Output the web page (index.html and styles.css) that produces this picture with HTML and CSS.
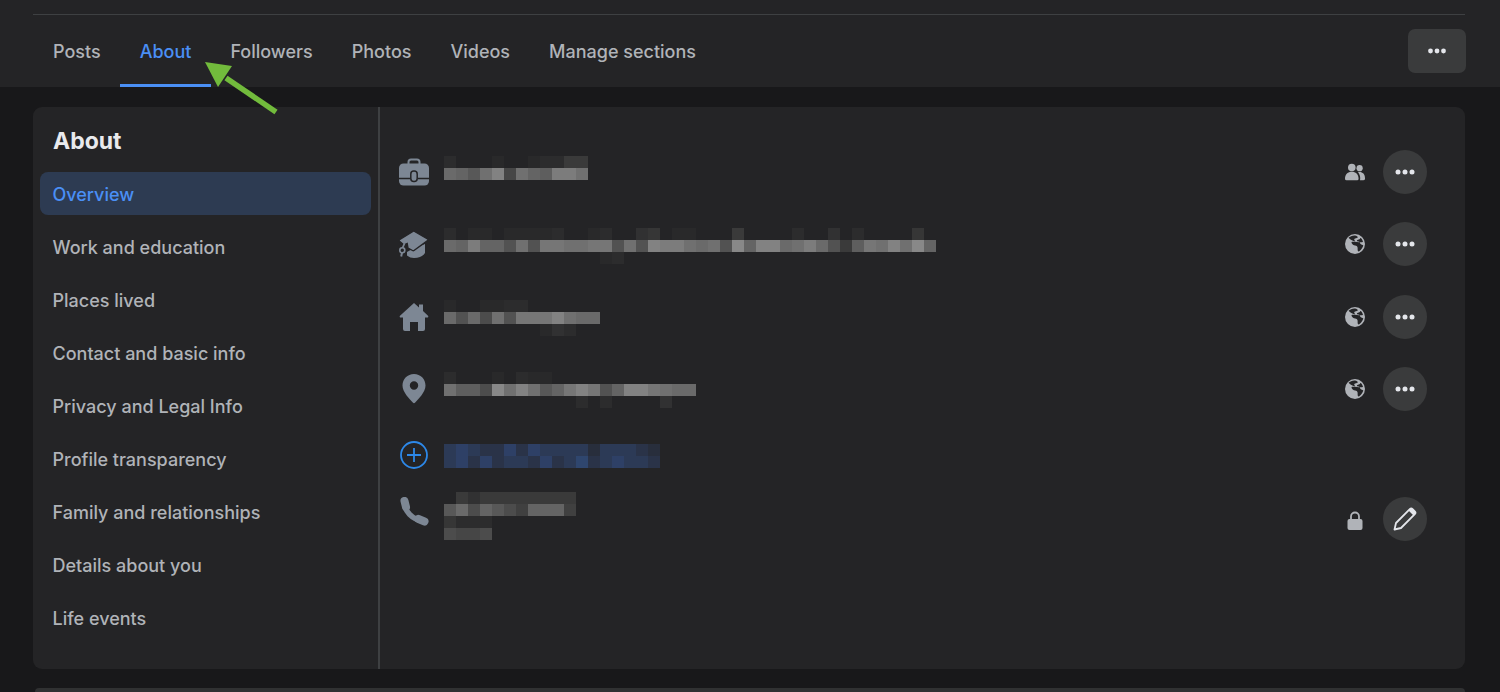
FILE: index.html
```html
<!DOCTYPE html>
<html lang="en">
<head>
<meta charset="utf-8">
<title>About</title>
<link rel="stylesheet" href="styles.css">
</head>
<body>
<header class="head">
  <div class="head-inner">
    <nav class="tabs">
      <a class="tab">Posts</a>
      <a class="tab active">About</a>
      <a class="tab">Followers</a>
      <a class="tab">Photos</a>
      <a class="tab">Videos</a>
      <a class="tab">Manage sections</a>
      <button class="more"><svg class="dots-s" viewBox="0 0 20 6"><circle cx="3.500" cy="3" r="2.400"/><circle cx="10" cy="3" r="2.400"/><circle cx="16.500" cy="3" r="2.400"/></svg></button>
    </nav>
  </div>
</header>
<svg class="arrow" viewBox="0 0 80 60"><path d="M26 18 L76 52" stroke="#72bb3c" stroke-width="5.500" fill="none"/><path d="M5 2 L32 6 L18 27 Z" fill="#72bb3c"/></svg>
<main class="card">
  <aside class="side">
    <h2 class="side-title">About</h2>
    <ul class="side-list">
      <li class="side-item sel">Overview</li>
      <li class="side-item">Work and education</li>
      <li class="side-item">Places lived</li>
      <li class="side-item">Contact and basic info</li>
      <li class="side-item">Privacy and Legal Info</li>
      <li class="side-item">Profile transparency</li>
      <li class="side-item">Family and relationships</li>
      <li class="side-item">Details about you</li>
      <li class="side-item">Life events</li>
    </ul>
  </aside>
  <section class="content">
    <div class="row">
      <svg class="ico" viewBox="0 0 30 30"><path d="M9.500 8V5a2.500 2.500 0 0 1 2.500-2.500h6A2.500 2.500 0 0 1 20.500 5v3" fill="none" stroke="#7d8794" stroke-width="2"/><rect x="0" y="6.500" width="30" height="22" rx="4.500" fill="#7d8794"/><path d="M0 21.500h11.500M18.500 21.500H30" stroke="#242426" stroke-width="1.600"/><rect x="11.800" y="14" width="6.400" height="10.500" rx="3" fill="#7d8794" stroke="#242426" stroke-width="1.500"/></svg>
      <div class="mosaic">
        <div class="mr"><i class="g2e"></i><i></i><i></i><i></i><i class="g2a"></i><i></i><i></i><i class="g2a"></i><i class="g2e"></i><i class="g2e"></i><i class="g3a"></i><i class="g3a"></i></div>
        <div class="mr"><i class="g6a"></i><i class="g64"></i><i class="g58"></i><i class="g70"></i><i class="g82"></i><i class="g46"></i><i class="g70"></i><i class="g64"></i><i class="g5e"></i><i class="g7c"></i><i class="g7c"></i><i class="g70"></i></div>
        <div class="mr"></div>
      </div>
      <svg class="priv" viewBox="0 0 20 20"><circle cx="6.800" cy="5.500" r="3.800"/><path d="M0 17c0-5 3-7.200 6.800-7.200S13.600 12 13.600 17a1.500 1.500 0 0 1-1.500 1.300H1.500A1.500 1.500 0 0 1 0 17z"/><circle cx="14.600" cy="6.200" r="3.100"/><path d="M13 10.200c4-.8 7 1.500 7 6a1.800 1.800 0 0 1-1.800 2H15c.6-3.300-.2-6-2-8z"/></svg>
      <button class="act"><svg class="dots" viewBox="0 0 20 6"><circle cx="3" cy="3" r="2.500"/><circle cx="10" cy="3" r="2.500"/><circle cx="17" cy="3" r="2.500"/></svg></button>
    </div>
    <div class="row">
      <svg class="ico" viewBox="0 0 30 30"><path d="M8 23 15 19 26 15v9c-2 3-6 5-11 5-2.500 0-5-.8-7-2.500z" fill="#7d8794"/><path d="M14.700 2 28.500 10a1 1 0 0 1 0 1.700L15 21.500a1.500 1.500 0 0 1-1.500 0L9 19l-.8-4.500L5 16l-4.500-3.800a1 1 0 0 1 0-1.500z" fill="#7d8794" stroke="#242426" stroke-width="1.400"/><path d="M5.500 14.500 3.500 19" stroke="#7d8794" stroke-width="1.800"/><circle cx="3.300" cy="21.200" r="2.500" fill="none" stroke="#7d8794" stroke-width="1.600"/><path d="M3 23.500l-.8 4" stroke="#7d8794" stroke-width="2"/></svg>
      <div class="mosaic">
        <div class="mr"><i class="g2e"></i><i></i><i class="g2a"></i><i class="g2a"></i><i></i><i class="g2a"></i><i class="g2a"></i><i class="g2a"></i><i class="g2a"></i><i class="g2e"></i><i></i><i></i><i class="g2a"></i><i class="g2e"></i><i></i><i></i><i class="g32"></i><i class="g36"></i><i></i><i class="g2a"></i><i class="g2a"></i><i></i><i></i><i></i><i class="g3a"></i><i></i><i></i><i></i><i></i><i class="g2e"></i><i></i><i></i><i class="g32"></i><i></i><i class="g2e"></i><i></i><i></i><i></i><i></i><i class="g36"></i></div>
        <div class="mr"><i class="g6a"></i><i class="g64"></i><i class="g7c"></i><i class="g64"></i><i class="g64"></i><i class="g52"></i><i class="g70"></i><i class="g52"></i><i class="g76"></i><i class="g76"></i><i class="g70"></i><i class="g70"></i><i class="g76"></i><i class="g76"></i><i class="g52"></i><i class="g70"></i><i class="g52"></i><i class="g82"></i><i class="g7c"></i><i class="g7c"></i><i class="g70"></i><i class="g6a"></i><i class="g70"></i><i class="g52"></i><i class="g88"></i><i class="g64"></i><i class="g82"></i><i class="g82"></i><i class="g6a"></i><i class="g70"></i><i class="g7c"></i><i class="g6a"></i><i class="g52"></i><i class="g3a"></i><i class="g5e"></i><i class="g76"></i><i class="g70"></i><i class="g82"></i><i class="g70"></i><i class="g88"></i><i class="g64"></i></div>
        <div class="mr"><i></i><i></i><i></i><i></i><i></i><i></i><i></i><i></i><i></i><i></i><i></i><i></i><i></i><i class="g2a"></i><i class="g2e"></i></div>
      </div>
      <svg class="priv" viewBox="0 0 20 20"><use href="#globe"/></svg>
      <button class="act"><svg class="dots" viewBox="0 0 20 6"><circle cx="3" cy="3" r="2.500"/><circle cx="10" cy="3" r="2.500"/><circle cx="17" cy="3" r="2.500"/></svg></button>
    </div>
    <div class="row low">
      <svg class="ico" viewBox="0 0 30 30"><path fill-rule="evenodd" d="M15 1 20 5.500V2.500h4V9l5 4.700c.7.800.2 1.800-.8 1.800H26V27a2 2 0 0 1-2 2h-5V20h-8v9H6a2 2 0 0 1-2-2V15.500H1.800c-1 0-1.500-1-.8-1.800z" fill="#7d8794"/></svg>
      <div class="mosaic">
        <div class="mr"><i class="g2a"></i><i></i><i></i><i class="g2a"></i><i class="g2a"></i><i class="g2e"></i><i class="g2e"></i></div>
        <div class="mr"><i class="g6a"></i><i class="g52"></i><i class="g6a"></i><i class="g4c"></i><i class="g70"></i><i class="g52"></i><i class="g76"></i><i class="g76"></i><i class="g76"></i><i class="g82"></i><i class="g70"></i><i class="g6a"></i><i class="g6a"></i></div>
        <div class="mr"><i></i><i></i><i></i><i></i><i></i><i></i><i></i><i></i><i class="g2a"></i><i class="g32"></i><i class="g2e"></i></div>
      </div>
      <svg class="priv" viewBox="0 0 20 20"><use href="#globe"/></svg>
      <button class="act"><svg class="dots" viewBox="0 0 20 6"><circle cx="3" cy="3" r="2.500"/><circle cx="10" cy="3" r="2.500"/><circle cx="17" cy="3" r="2.500"/></svg></button>
    </div>
    <div class="row low">
      <svg class="ico" viewBox="0 0 30 30"><path fill-rule="evenodd" d="M15 0C8.500 0 3.500 5 3.500 11.500c0 6.500 7 13.500 10.300 17a1.600 1.600 0 0 0 2.400 0c3.300-3.500 10.300-10.500 10.300-17C26.500 5 21.500 0 15 0zm0 7.300a4.200 4.200 0 1 1 0 8.400 4.200 4.200 0 0 1 0-8.400z" fill="#7d8794"/></svg>
      <div class="mosaic">
        <div class="mr"><i class="g2e"></i><i></i><i></i><i></i><i class="g2a"></i><i></i><i class="g2e"></i><i class="g2a"></i><i class="g2a"></i></div>
        <div class="mr"><i class="g70"></i><i class="g5e"></i><i class="g5e"></i><i class="g4c"></i><i class="g88"></i><i class="g70"></i><i class="g82"></i><i class="g70"></i><i class="g58"></i><i class="g64"></i><i class="g76"></i><i class="g82"></i><i class="g76"></i><i class="g52"></i><i class="g64"></i><i class="g82"></i><i class="g82"></i><i class="g76"></i><i class="g70"></i><i class="g6a"></i><i class="g6a"></i></div>
        <div class="mr"><i></i><i></i><i></i><i></i><i></i><i></i><i></i><i></i><i></i><i></i><i></i><i class="g2e"></i><i></i><i class="g2e"></i><i></i><i></i><i></i><i></i><i class="g32"></i></div>
      </div>
      <svg class="priv" viewBox="0 0 20 20"><use href="#globe"/></svg>
      <button class="act"><svg class="dots" viewBox="0 0 20 6"><circle cx="3" cy="3" r="2.500"/><circle cx="10" cy="3" r="2.500"/><circle cx="17" cy="3" r="2.500"/></svg></button>
    </div>
    <div class="row add">
      <svg class="ico" viewBox="0 0 30 30"><circle cx="15" cy="15" r="13" fill="none" stroke="#2d88e8" stroke-width="1.800"/><path d="M15 8v14M8 15h14" stroke="#2d88e8" stroke-width="1.800"/></svg>
      <div class="mosaic">
        <div class="mr"><i class="b3"></i><i class="b4"></i><i class="b3"></i><i class="b2"></i><i class="b2"></i><i class="b4"></i><i class="b2"></i><i class="b4"></i><i class="b3"></i><i class="b3"></i><i class="b3"></i><i class="b3"></i><i class="b1"></i><i class="b3"></i><i class="b3"></i><i class="b3"></i><i class="b2"></i><i class="b1"></i></div>
        <div class="mr"><i class="b3"></i><i class="b4"></i><i class="b2"></i><i class="b4"></i><i class="b2"></i><i class="b3"></i><i class="b3"></i><i class="b2"></i><i class="b4"></i><i class="b2"></i><i class="b3"></i><i class="b5"></i><i class="b2"></i><i class="b3"></i><i class="b4"></i><i class="b3"></i><i class="b3"></i><i class="b2"></i></div>
      </div>
    </div>
    <div class="row phone">
      <svg class="ico" viewBox="0 0 30 30"><path d="M5.500 4C5 14 13 23 25 24" fill="none" stroke="#7d8794" stroke-width="5.500"/><path d="M5.500 4l1.500 6M19.500 22l6 2.500" stroke="#7d8794" stroke-width="8" stroke-linecap="round"/></svg>
      <div class="mosaic">
        <div class="mr"><i></i><i class="g3a"></i><i class="g32"></i><i class="g3a"></i><i class="g3a"></i><i class="g3a"></i><i class="g3a"></i><i class="g3a"></i><i class="g3a"></i><i class="g3a"></i><i class="g3a"></i></div>
        <div class="mr"><i class="g58"></i><i class="g6a"></i><i class="g4c"></i><i class="g64"></i><i class="g58"></i><i class="g4c"></i><i class="g40"></i><i class="g64"></i><i class="g64"></i><i class="g64"></i><i class="g40"></i></div>
        <div class="mr"><i class="g36"></i><i class="g2e"></i><i class="g2e"></i><i class="g2e"></i></div>
        <div class="mr"><i class="g4c"></i><i class="g46"></i><i class="g46"></i><i class="g4c"></i></div>
      </div>
      <svg class="priv lockic" viewBox="0 0 20 20"><path d="M6 9V5.500a4 4 0 0 1 8 0V9" fill="none" stroke="#b0b3b8" stroke-width="1.800"/><rect x="2.500" y="8" width="15" height="11" rx="2"/></svg>
      <button class="act"><svg class="pencil" viewBox="0 0 24 24"><path d="M1.500 22.500 3 16 16.800 2.200a2 2 0 0 1 2.800 0l2.200 2.200a2 2 0 0 1 0 2.800L8 21z" fill="none" stroke="#e4e6eb" stroke-width="1.800" stroke-linejoin="round"/><path d="M15.500 3.500l5 5L22 7V4.500L19.500 2H17z" fill="#e4e6eb"/></svg></button>
    </div>
  </section>
</main>
<div class="next"></div>
<svg class="defs" width="0" height="0"><defs><g id="globe"><path fill-rule="evenodd" d="M10 0a10 10 0 1 0 0 20 10 10 0 0 0 0-20zM3.500 3.800C5 2.300 7.500 1.300 10 1.500c1.800.2 2.500 1 3 1.800-.8 1-3 .8-3.700 1.800-.5 1 1 1.500.5 2.500-.6.900-2.300-.4-3.100.5-.7.800.5 1.800 1.300 2.600 1.200 1 3 .5 4 1.600 1 1.300.5 2.600.7 4 .1.900.7 1.500 1.500.9 2.200-1.600 3.500-3.500 4.100-5.700-.8-.9-1.800-.8-2.700-1.500-.8-.7-.3-1.700-1.300-2.300-.9-.5-1.800.2-2.300-.6-.4-.8.8-1.300 1.700-1.600 1-.3 1.500-.8 1.500-1.500C16.500 4 17.500 6 18 8c-3 1-11 0-14.500-4.200z"/></g></defs></svg>
</body>
</html>
```
FILE: styles.css
```css
* { box-sizing: border-box; }
html, body { margin: 0; height: 692px; overflow: hidden; }
body {
  position: relative;
  background: #18181a;
  font-family: Inter, "Liberation Sans", sans-serif;
  color: #b0b3b8;
}
.head { background: #242426; height: 87px; padding: 14px 35px 0 33px; }
.head-inner { border-top: 1px solid #3e4042; }
.tabs { display: flex; align-items: center; height: 72px; padding-left: 0.5px; }
.tab {
  display: flex;
  align-items: center;
  height: 72px;
  padding: 0 19.5px;
  border-top: 4px solid transparent;
  border-bottom: 3px solid transparent;
  font-size: 18px;
  font-weight: 500;
}
.tab.active { color: #4a8ff5; border-bottom-color: #4a8ff5; }
.more {
  margin-left: auto;
  margin-right: -1px;
  width: 58px;
  height: 44px;
  border: 0;
  border-radius: 7px;
  background: #3a3b3c;
  display: flex;
  align-items: center;
  justify-content: center;
  padding: 0;
}
.dots-s { width: 20px; height: 6px; fill: #e4e6eb; }
.arrow { position: absolute; left: 200px; top: 60px; width: 80px; height: 60px; }
.card {
  display: flex;
  height: 562px;
  margin: 20px 35px 0 33px;
  background: #242426;
  border-radius: 9px;
}
.side {
  width: 347px;
  flex: none;
  border-right: 2px solid #3e4042;
  padding: 0 7px;
}
.side-title {
  margin: 0;
  padding: 19px 13px 0;
  height: 65px;
  font-size: 23px;
  line-height: 30px;
  font-weight: 700;
  color: #e9eaed;
}
.side-list { list-style: none; margin: 0; padding: 0; display: flex; flex-direction: column; gap: 10px; }
.side-item {
  height: 43px;
  padding: 0 12.5px;
  line-height: 46px;
  font-size: 18px;
  font-weight: 500;
  border-radius: 8px;
}
.side-item.sel { background: #2d3b52; color: #4a8ff5; }
.content { flex: 1; padding: 31px 38px 0 19px; }
.row { display: flex; align-items: center; height: 72px; }
.ico { width: 30px; height: 30px; flex: none; margin: 0 15px 4px 0; }
.row.low .ico, .row.low .priv, .row.low .act { margin-bottom: 2px; }
.row.add { height: 60px; }
.row.add .ico { margin-bottom: 2px; }
.row.phone { height: 60px; align-items: flex-start; padding-top: 6px; }
.row.phone .ico { margin-top: 5px; margin-bottom: 0; }
.row.phone .priv { margin-top: 19px; margin-bottom: 0; }
.row.phone .act { margin-top: 5px; margin-bottom: 0; }
.mosaic { flex: 1; display: flex; flex-direction: column; }
.mr { display: flex; height: 12px; }
.mr i { display: block; width: 12px; height: 12px; flex: none; }
.priv { width: 20px; height: 20px; flex: none; fill: #b0b3b8; margin: 0 18.5px 4px 0; }
.act {
  width: 44px;
  height: 44px;
  flex: none;
  border: 0;
  border-radius: 50%;
  background: #3a3b3c;
  display: flex;
  align-items: center;
  justify-content: center;
  padding: 0;
  margin-bottom: 4px;
}
.dots { width: 20px; height: 6px; fill: #e4e6eb; }
.pencil { width: 24px; height: 24px; }
.next {
  height: 4px;
  margin: 19px 35px 0 35px;
  background: #303132;
  border-radius: 9px 9px 0 0;
}
.defs { position: absolute; }
.g2a { background: #29292a; } .g2e { background: #2c2c2d; } .g32 { background: #313132; }
.g36 { background: #363636; } .g3a { background: #3a3a3a; } .g40 { background: #404040; }
.g46 { background: #464646; } .g4c { background: #4c4c4c; } .g52 { background: #525252; }
.g58 { background: #585858; } .g5e { background: #5e5e5e; } .g64 { background: #646464; }
.g6a { background: #6a6a6a; } .g70 { background: #707070; } .g76 { background: #767676; }
.g7c { background: #7c7c7c; } .g82 { background: #828282; } .g88 { background: #888888; }
.b1 { background: #282e3c; } .b2 { background: #2a3348; } .b3 { background: #2c3a56; }
.b4 { background: #2e4066; } .b5 { background: #2f466e; }
```
